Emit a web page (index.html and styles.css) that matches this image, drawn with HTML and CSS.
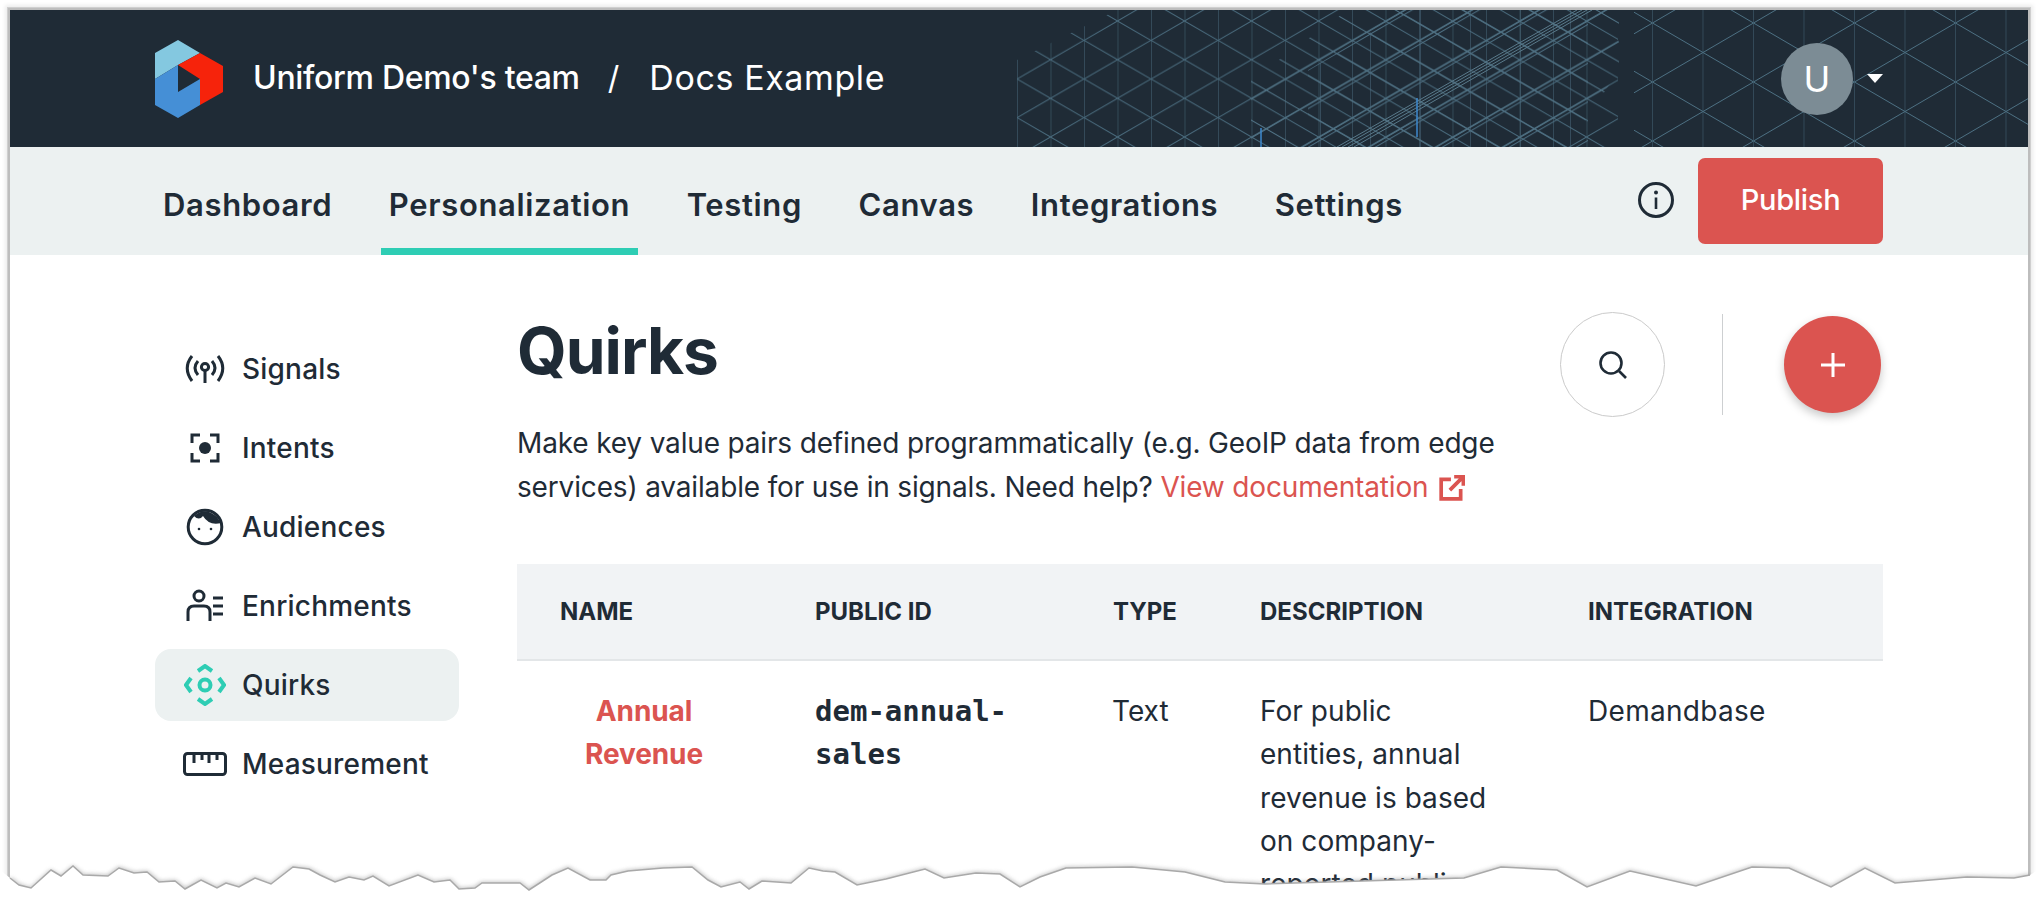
FILE: index.html
```html
<!DOCTYPE html>
<html lang="en">
<head>
<meta charset="utf-8">
<title>Quirks</title>
<link rel="stylesheet" href="styles.css">
</head>
<body>
<div class="sheet">
  <header class="top">
    <svg class="mesh" viewBox="0 0 1020 137" width="1020" height="137" aria-hidden="true">
      <defs>
        <pattern id="dia" width="67" height="38.67" patternUnits="userSpaceOnUse" x="9" y="11">
          <path d="M0 19.33 33.5 0 67 19.33 33.5 38.67Z" fill="none" stroke="#4b6d80" stroke-width="1"/>
        </pattern>
        <pattern id="ver" width="33.5" height="137" patternUnits="userSpaceOnUse" x="9">
          <path d="M0 0V137" fill="none" stroke="#4b6d80" stroke-width="1"/>
        </pattern>
        <pattern id="dia2" width="67" height="38.67" patternUnits="userSpaceOnUse" x="24" y="3">
          <path d="M0 19.33 33.5 0 67 19.33 33.5 38.67Z" fill="none" stroke="#54788b" stroke-width="1"/>
        </pattern>
        <pattern id="dia3" width="67" height="38.67" patternUnits="userSpaceOnUse" x="-6" y="24">
          <path d="M0 19.33 33.5 0 67 19.33 33.5 38.67Z" fill="none" stroke="#4f7285" stroke-width="1"/>
        </pattern>
        <pattern id="ver2" width="50" height="137" patternUnits="userSpaceOnUse" x="12">
          <path d="M0 0V137" fill="none" stroke="#4f7285" stroke-width="1"/>
        </pattern>
        <pattern id="big" width="101" height="59" patternUnits="userSpaceOnUse" x="695" y="13">
          <path d="M0 29.500 50.500 0 101 29.500 50.500 59Z" fill="none" stroke="#4f7487" stroke-width="1"/>
        </pattern>
        <pattern id="bigv" width="50.500" height="137" patternUnits="userSpaceOnUse" x="644">
          <path d="M0 0V137" fill="none" stroke="#4a6b7e" stroke-width="1"/>
        </pattern>
        <clipPath id="left"><path d="M9 50 109 0H610V137H9Z"/></clipPath>
        <clipPath id="mid"><path d="M243 137V70L340 0H611V60L560 137Z"/></clipPath>
        <clipPath id="mid2"><path d="M300 137V60L400 0H580V137Z"/></clipPath>
      </defs>
      <g clip-path="url(#left)">
        <rect width="1020" height="137" fill="url(#dia)"/>
        <rect width="1020" height="137" fill="url(#ver)"/>
      </g>
      <g clip-path="url(#mid)"><rect width="1020" height="137" fill="url(#dia2)"/></g>
      <g clip-path="url(#mid2)">
        <rect width="1020" height="137" fill="url(#dia3)"/>
        <rect width="1020" height="137" fill="url(#ver2)"/>
      </g>
      <rect x="626" width="394" height="137" fill="url(#big)"/>
      <rect x="644" width="376" height="137" fill="url(#bigv)"/>
      <path d="M329 137 569 0M334 137 574 0M340 137 579 0M346 137 584 0" stroke="#5d7f90" stroke-width="1" fill="none"/>
      <path d="M409 88V127M253 118V137" stroke="#3f8fd6" stroke-width="1.500" fill="none"/>
    </svg>
    <div class="brand">
      <svg class="logo" viewBox="0 0 68 78" width="68" height="78" aria-label="Uniform">
        <path d="M23 0 45 13 23 25 0 39V13Z" fill="#84c8e0"/>
        <path d="M0 39 23 25V52L45 39V65L23 78 0 65Z" fill="#458fd6"/>
        <path d="M45 13 68 26V52L45 65V39L23 25Z" fill="#f6230b"/>
      </svg>
      <span class="team">Uniform Demo's team</span>
      <span class="slash">/</span>
      <span class="project">Docs Example</span>
    </div>
    <div class="user">
      <span class="avatar">U</span>
      <span class="caret"></span>
    </div>
  </header>

  <nav class="tabs">
    <a class="tab">Dashboard</a>
    <a class="tab tab-on">Personalization</a>
    <a class="tab">Testing</a>
    <a class="tab">Canvas</a>
    <a class="tab">Integrations</a>
    <a class="tab">Settings</a>
    <svg class="info" viewBox="0 0 36 36" width="36" height="36" aria-hidden="true">
      <circle cx="18" cy="18" r="16.500" fill="none" stroke="#1f2b36" stroke-width="3"/>
      <circle cx="18" cy="10.500" r="2" fill="#1f2b36"/>
      <path d="M18 15.500V27" stroke="#1f2b36" stroke-width="2.600"/>
    </svg>
    <button class="publish">Publish</button>
  </nav>

  <div class="body">
    <aside class="side">
      <a class="item">
        <svg class="ico" viewBox="0 0 44 32" width="44" height="32" aria-hidden="true"><g fill="none" stroke="#1f2b36" stroke-width="3"><path d="M9 3Q-.5 15 9 28M35 3Q44.500 15 35 28M15 8Q9 15 15 22M29 8Q35 15 29 22"/><circle cx="22" cy="14" r="3.600"/><path d="M22 18V30"/></g></svg>
        <span>Signals</span>
      </a>
      <a class="item">
        <svg class="ico" viewBox="0 0 30 30" width="30" height="30" aria-hidden="true"><path d="M10 2H2V10M20 2H28V10M10 28H2V20M20 28H28V20" fill="none" stroke="#1f2b36" stroke-width="3"/><circle cx="15" cy="15" r="6" fill="#1f2b36"/></svg>
        <span>Intents</span>
      </a>
      <a class="item">
        <svg class="ico" viewBox="0 0 38 38" width="38" height="38" aria-hidden="true"><circle cx="19" cy="19" r="16.800" fill="none" stroke="#1f2b36" stroke-width="3"/><path d="M8 8Q19-2 31 9L35 15Q23 18 17 8 13 13 8 8Z" fill="#1f2b36"/><circle cx="13" cy="21" r="1.300" fill="#1f2b36"/><circle cx="25" cy="21" r="1.300" fill="#1f2b36"/></svg>
        <span>Audiences</span>
      </a>
      <a class="item">
        <svg class="ico" viewBox="0 0 38 34" width="38" height="34" aria-hidden="true"><circle cx="13" cy="7" r="5" fill="none" stroke="#1f2b36" stroke-width="3"/><path d="M2 32V23Q2 17 8 17H18Q24 17 24 23V32" fill="none" stroke="#1f2b36" stroke-width="3"/><path d="M27 9H37M27 17H37M27 25H37" stroke="#1f2b36" stroke-width="3"/></svg>
        <span>Enrichments</span>
      </a>
      <a class="item item-on">
        <svg class="ico" viewBox="0 0 42 42" width="42" height="42" aria-hidden="true"><g fill="none" stroke="#2ecdb4" stroke-width="4"><path d="M14 7 21 2 28 7M14 35 21 40 28 35M7 14 2 21 7 28M35 14 40 21 35 28"/><circle cx="21" cy="21" r="5.500"/></g></svg>
        <span>Quirks</span>
      </a>
      <a class="item">
        <svg class="ico" viewBox="0 0 44 24" width="44" height="24" aria-hidden="true"><rect x="1.500" y="1.500" width="41" height="21" rx="3" fill="none" stroke="#1f2b36" stroke-width="3"/><path d="M11 2V11M19 2V8M26 2V11M34 2V8" stroke="#1f2b36" stroke-width="3"/></svg>
        <span>Measurement</span>
      </a>
    </aside>

    <main class="main">
      <div class="head">
        <div class="intro">
          <h1 class="title">Quirks</h1>
          <p class="lead">Make key value pairs defined programmatically (e.g. GeoIP data from edge services) available for use in signals. Need help? <a class="link">View documentation <svg class="ext" viewBox="0 0 24 24" width="26" height="26" aria-hidden="true"><path d="M11 4H2V22H20V13" fill="none" stroke="#db5450" stroke-width="3.400"/><path d="M14 1.500H22.500V10M22 2 10 14" fill="none" stroke="#db5450" stroke-width="3.400"/></svg></a></p>
        </div>
        <div class="acts">
          <button class="search" aria-label="Search"><svg viewBox="0 0 30 30" width="30" height="30" aria-hidden="true"><circle cx="13" cy="13" r="10.500" fill="none" stroke="#1f2b36" stroke-width="2.600"/><path d="M21 21 28 28" stroke="#1f2b36" stroke-width="2.600"/></svg></button>
          <span class="rule"></span>
          <button class="plus" aria-label="Add"><svg viewBox="0 0 24 24" width="24" height="24" aria-hidden="true"><path d="M12 0V24M0 12H24" stroke="#fff" stroke-width="3"/></svg></button>
        </div>
      </div>

      <table class="tbl">
        <thead>
          <tr>
            <th class="c1">NAME</th>
            <th class="c2">PUBLIC ID</th>
            <th class="c3">TYPE</th>
            <th class="c4">DESCRIPTION</th>
            <th class="c5">INTEGRATION</th>
          </tr>
        </thead>
        <tbody>
          <tr>
            <td class="name">Annual Revenue</td>
            <td class="pid">dem-annual-sales</td>
            <td class="kind">Text</td>
            <td class="desc">For public entities, annual revenue is based on company-reported public</td>
            <td>Demandbase</td>
          </tr>
        </tbody>
      </table>
    </main>
  </div>
</div>

<svg class="tear" viewBox="0 0 2038 100" width="2038" height="100" aria-hidden="true">
  <defs>
    <filter id="soft" x="-2%" y="-40%" width="104%" height="200%"><feGaussianBlur stdDeviation="2.200"/></filter>
  </defs>
  <path class="tear-shade" filter="url(#soft)" d="M10 79 19 86 31 90 41 81 51 72 61 78 73 68 83 76 108 77 119 69 134 74 147 73 159 83 175 82 185 90 201 81 217 89 226 84 239 88 255 79 271 85 293 68 309 70 320 76 335 83 349 78 364 81 373 77 389 87 418 76 434 83 450 81 459 90 475 89 482 84 520 84 529 91 552 76 568 69 590 81 606 81 611 76 628 72 663 69 692 68 708 81 721 88 740 83 749 90 762 82 791 84 809 69 823 72 835 73 857 86 886 80 925 70 944 79 976 74 1000 75 1020 88 1040 78 1066 69 1132 68 1185 73 1225 83 1265 85 1464 79 1501 68 1557 71 1587 88 1630 72 1696 87 1752 68 1789 69 1831 88 1865 69 1895 84 1967 78 2014 79 2030 76"/>
  <path class="tear-fill" d="M0 70V100H2038V70L2030 75 2014 78 1967 77 1895 83 1865 68 1831 87 1789 68 1752 67 1696 86 1630 71 1587 87 1557 70 1501 67 1464 78 1265 84 1225 82 1185 72 1132 67 1066 68 1040 77 1020 87 1000 74 976 73 944 78 925 69 886 79 857 85 835 72 823 71 809 68 791 83 762 81 749 89 740 82 721 87 708 80 692 67 663 68 628 71 611 75 606 80 590 80 568 68 552 75 529 90 520 83 482 83 475 88 459 89 450 80 434 82 418 75 389 86 373 76 364 80 349 77 335 82 320 75 309 69 293 67 271 84 255 78 239 87 226 83 217 88 201 80 185 89 175 81 159 82 147 72 134 73 119 68 108 76 83 75 73 66 61 76 51 70 41 79 31 88 19 85 10 78Z"/>
  <path class="tear-line" d="M10 78 19 85 31 88 41 79 51 70 61 76 73 66 83 75 108 76 119 68 134 73 147 72 159 82 175 81 185 89 201 80 217 88 226 83 239 87 255 78 271 84 293 67 309 69 320 75 335 82 349 77 364 80 373 76 389 86 418 75 434 82 450 80 459 89 475 88 482 83 520 83 529 90 552 75 568 68 590 80 606 80 611 75 628 71 663 68 692 67 708 80 721 87 740 82 749 89 762 81 791 83 809 68 823 71 835 72 857 85 886 79 925 69 944 78 976 73 1000 74 1020 87 1040 77 1066 68 1132 67 1185 72 1225 82 1265 84 1464 78 1501 67 1557 70 1587 87 1630 71 1696 86 1752 67 1789 68 1831 87 1865 68 1895 83 1967 77 2014 78 2030 75"/>
</svg>
</body>
</html>
```
FILE: styles.css
```css
* { box-sizing: border-box; }
html, body { margin: 0; height: 100%; background: #fff; overflow: hidden; }
body {
  padding: 10px 10px 0 10px;
  font-family: Inter, "Noto Sans", "Liberation Sans", sans-serif;
  color: #1f2b36;
}
.sheet {
  height: 880px;
  background: #fff;
  box-shadow: 0 0 0 2px #bdbdbd, 0 0 0 3px #cfcfcf, 0 0 4px 5px #ececec;
  overflow: hidden;
}

/* header */
.top {
  height: 137px;
  background: #1f2b36;
  display: flex;
  align-items: center;
  justify-content: space-between;
  padding: 0 145px;
  position: relative;
  overflow: hidden;
}
.mesh { position: absolute; right: 0; top: 0; opacity: .95; }
.brand, .user { display: flex; align-items: center; position: relative; }
.team, .project, .slash { color: #fff; padding-bottom: 3px; }
.team { margin-left: 30px; font-size: 32px; font-weight: 500; letter-spacing: -.3px; }
.slash { margin: 0 30px 0 28px; font-size: 32px; }
.project { font-size: 34px; letter-spacing: .6px; }
.user { gap: 14px; }
.avatar {
  width: 72px; height: 72px; border-radius: 50%;
  background: #7c8c95; color: #fff;
  display: flex; align-items: center; justify-content: center;
  font-size: 36px;
}
.caret {
  width: 0; height: 0;
  border-left: 8px solid transparent;
  border-right: 8px solid transparent;
  border-top: 9px solid #fff;
}

/* tabs */
.tabs {
  height: 108px;
  background: #ecf1f1;
  display: flex;
  align-items: stretch;
  padding: 0 145px;
}
.tab {
  display: flex; align-items: center;
  padding: 14px 8px 0;
  margin-right: 40.500px;
  font-size: 31px;
  font-weight: 600;
  letter-spacing: .65px;
  border-bottom: 7px solid transparent;
  white-space: nowrap;
}
.tab-on { border-bottom-color: #2ecdb4; }
.info { align-self: center; margin: -2px 24px 0 auto; }
.publish {
  align-self: flex-start;
  margin-top: 11px;
  width: 185px; height: 86px;
  border: 0; border-radius: 7px;
  background: #db5450; color: #fff;
  font: 500 29px Inter, sans-serif;
  letter-spacing: -.3px;
  padding-bottom: 5px;
}

/* body */
.body { display: flex; padding: 0 145px; }
.side {
  width: 304px;
  padding-top: 78px;
  display: flex; flex-direction: column; gap: 7px;
  flex: none;
  margin-right: 58px;
}
.item {
  height: 72px;
  border-radius: 16px;
  display: flex; align-items: center;
  position: relative;
  padding-left: 87px;
  font-size: 28px;
  font-weight: 500;
  letter-spacing: .2px;
}
.item-on { background: #ecf1f1; }
.ico { position: absolute; left: 50px; top: 50%; transform: translate(-50%, -50%); }

/* main */
.main { flex: 1; min-width: 0; }
.head { display: flex; justify-content: space-between; align-items: flex-start; }
.intro { width: 1000px; }
.title { margin: 59px 0 0; font-size: 64px; line-height: 74px; font-weight: 700; letter-spacing: -1px; }
.lead { margin: 34px 0 0; font-size: 28px; line-height: 43.500px; letter-spacing: -.16px; }
.link { color: #db5450; }
.ext { vertical-align: -4px; margin-left: 3px; }
.acts { display: flex; align-items: center; padding-top: 57px; margin-right: 2px; }
.search {
  width: 105px; height: 105px; border-radius: 50%;
  border: 1px solid #cbcbcb; background: #fff;
  display: flex; align-items: center; justify-content: center;
  padding: 0;
}
.rule { width: 1px; height: 101px; background: #cdcfd1; margin: 0 61px 0 57px; }
.plus {
  width: 97px; height: 97px; border-radius: 50%;
  border: 0; padding: 0;
  background: #db5450;
  box-shadow: 0 4px 10px rgba(0,0,0,.22);
  display: flex; align-items: center; justify-content: center;
}

/* table */
.tbl { width: 100%; margin-top: 55px; border-collapse: collapse; table-layout: fixed; }
.tbl th {
  height: 96px;
  background: #f1f3f5;
  border-bottom: 2px solid #e3e6e8;
  font-size: 24px; font-weight: 700;
  text-align: left;
  padding: 0 0 0 43px;
}
.c1 { width: 255px; }
.c2 { width: 298px; }
.c3 { width: 147px; }
.c4 { width: 328px; }
.tbl td {
  vertical-align: top;
  padding: 29px 32px 0 43px;
  font-size: 28px;
  line-height: 43.300px;
  letter-spacing: .3px;
}
.tbl .name { color: #db5450; font-weight: 700; text-align: center; padding-right: 44px; letter-spacing: -.1px; }
.tbl .pid { font: 700 29px/43.300px "DejaVu Sans Mono", "Liberation Mono", monospace; letter-spacing: 0; padding-right: 40px; }
.tbl .kind { padding-left: 42px; letter-spacing: 0; }
.tbl .desc { padding-right: 53px; letter-spacing: .05px; }

/* torn edge, laid over the foot of the sheet */
.tear { position: absolute; left: 0; bottom: 0; }
.tear-fill { fill: #fff; }
.tear-line { fill: none; stroke: #a9a9a9; stroke-width: 1.500; }
.tear-shade { fill: none; stroke: #8a8a8a; stroke-width: 4; opacity: .6; }
```
